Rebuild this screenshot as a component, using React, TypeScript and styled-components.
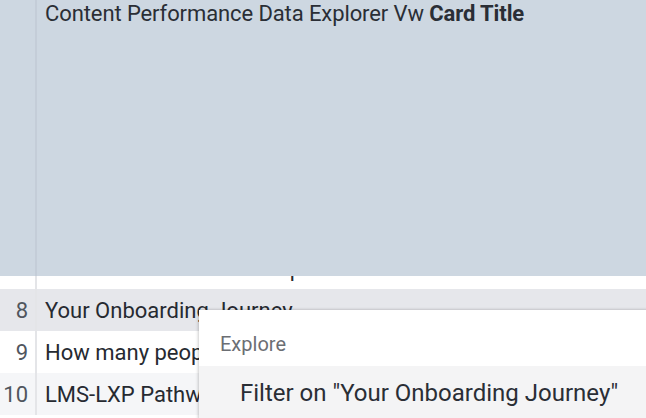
import styled, { createGlobalStyle } from 'styled-components'

const GlobalStyle = createGlobalStyle`
    html, body {
        margin: 0;
        padding: 0;
        background: #ffffff;
    }
    body {
        font-family: Roboto, "Liberation Sans", sans-serif;
        color: #2a2e35;
    }
`;

const Page = styled.div`
    position: relative;
    width: 646px;
    height: 418px;
    overflow: hidden;
    background: #ffffff;
`;

const Table = styled.div`
    display: flex;
    flex-direction: column;
    margin-top: -5px;
`;

const Row = styled.div<{ $bg: string }>`
    display: grid;
    grid-template-columns: 35px 2px 1fr;
    height: 42px;
    background: ${(p) => p.$bg};
`;

const Num = styled.div`
    display: flex;
    align-items: center;
    justify-content: flex-end;
    padding-right: 7px;
    font-size: 22px;
    color: #50565e;
`;

const Divider = styled.div`
    background: #e4e5e8;
`;

const Cell = styled.div`
    display: flex;
    align-items: center;
    padding-left: 8px;
    font-size: 22px;
    white-space: nowrap;
    overflow: hidden;
    color: #262a31;
`;

// selected card sits over the top of the table
const Card = styled.div`
    position: absolute;
    top: 0;
    left: 0;
    right: 0;
    height: 276px;
    display: grid;
    grid-template-columns: 35px 2px 1fr;
    background: #cdd7e1;
`;

const CardDivider = styled.div`
    background: #c4cdd8;
`;

const CardTitle = styled.div`
    padding: 0 0 0 8px;
    font-size: 22px;
    line-height: 28px;
    letter-spacing: -0.1px;
    color: #2a2e35;
    white-space: nowrap;

    b {
        font-weight: 700;
    }
`;

const Menu = styled.div`
    position: absolute;
    left: 199px;
    top: 310px;
    width: 480px;
    background: #ffffff;
    box-shadow: -1px 0 3px rgba(0, 0, 0, 0.18), 0 -1px 2px rgba(0, 0, 0, 0.06);
    display: flex;
    flex-direction: column;
`;

const MenuHeader = styled.div`
    height: 56px;
    box-sizing: border-box;
    padding: 22px 0 0 21px;
    font-size: 20px;
    line-height: 24px;
    color: #6b6e73;
`;

const MenuItem = styled.div`
    height: 54px;
    display: flex;
    align-items: center;
    padding-left: 41px;
    font-size: 24px;
    color: #2a2e35;
    background: #f4f4f5;
    white-space: nowrap;
`;

const rows = [
    { n: 1, label: 'Welcome to the Platform', bg: '#ffffff' },
    { n: 2, label: 'Getting Started Guide', bg: '#ffffff' },
    { n: 3, label: 'Compliance Training 2023', bg: '#ffffff' },
    { n: 4, label: 'Manager Essentials', bg: '#ffffff' },
    { n: 5, label: 'Sales Enablement Basics', bg: '#ffffff' },
    { n: 6, label: 'Security Awareness', bg: '#ffffff' },
    { n: 7, label: 'Introduction to Leadership', bg: '#ffffff' },
    { n: 8, label: 'Your Onboarding Journey', bg: '#e6e7eb' },
    { n: 9, label: 'How many people completed', bg: '#ffffff' },
    { n: 10, label: 'LMS-LXP Pathways', bg: '#f5f6f8' },
];

function App() {
    return (
        <>
            <GlobalStyle />
            <Page>
                <Table>
                    {rows.map((r) => (
                        <Row key={r.n} $bg={r.bg}>
                            <Num>{r.n}</Num>
                            <Divider />
                            <Cell>{r.label}</Cell>
                        </Row>
                    ))}
                </Table>
                <Card>
                    <div />
                    <CardDivider />
                    <CardTitle>
                        Content Performance Data Explorer Vw <b>Card Title</b>
                    </CardTitle>
                </Card>
                <Menu>
                    <MenuHeader>Explore</MenuHeader>
                    <MenuItem>Filter on "Your Onboarding Journey"</MenuItem>
                </Menu>
            </Page>
        </>
    )
}

export default App
